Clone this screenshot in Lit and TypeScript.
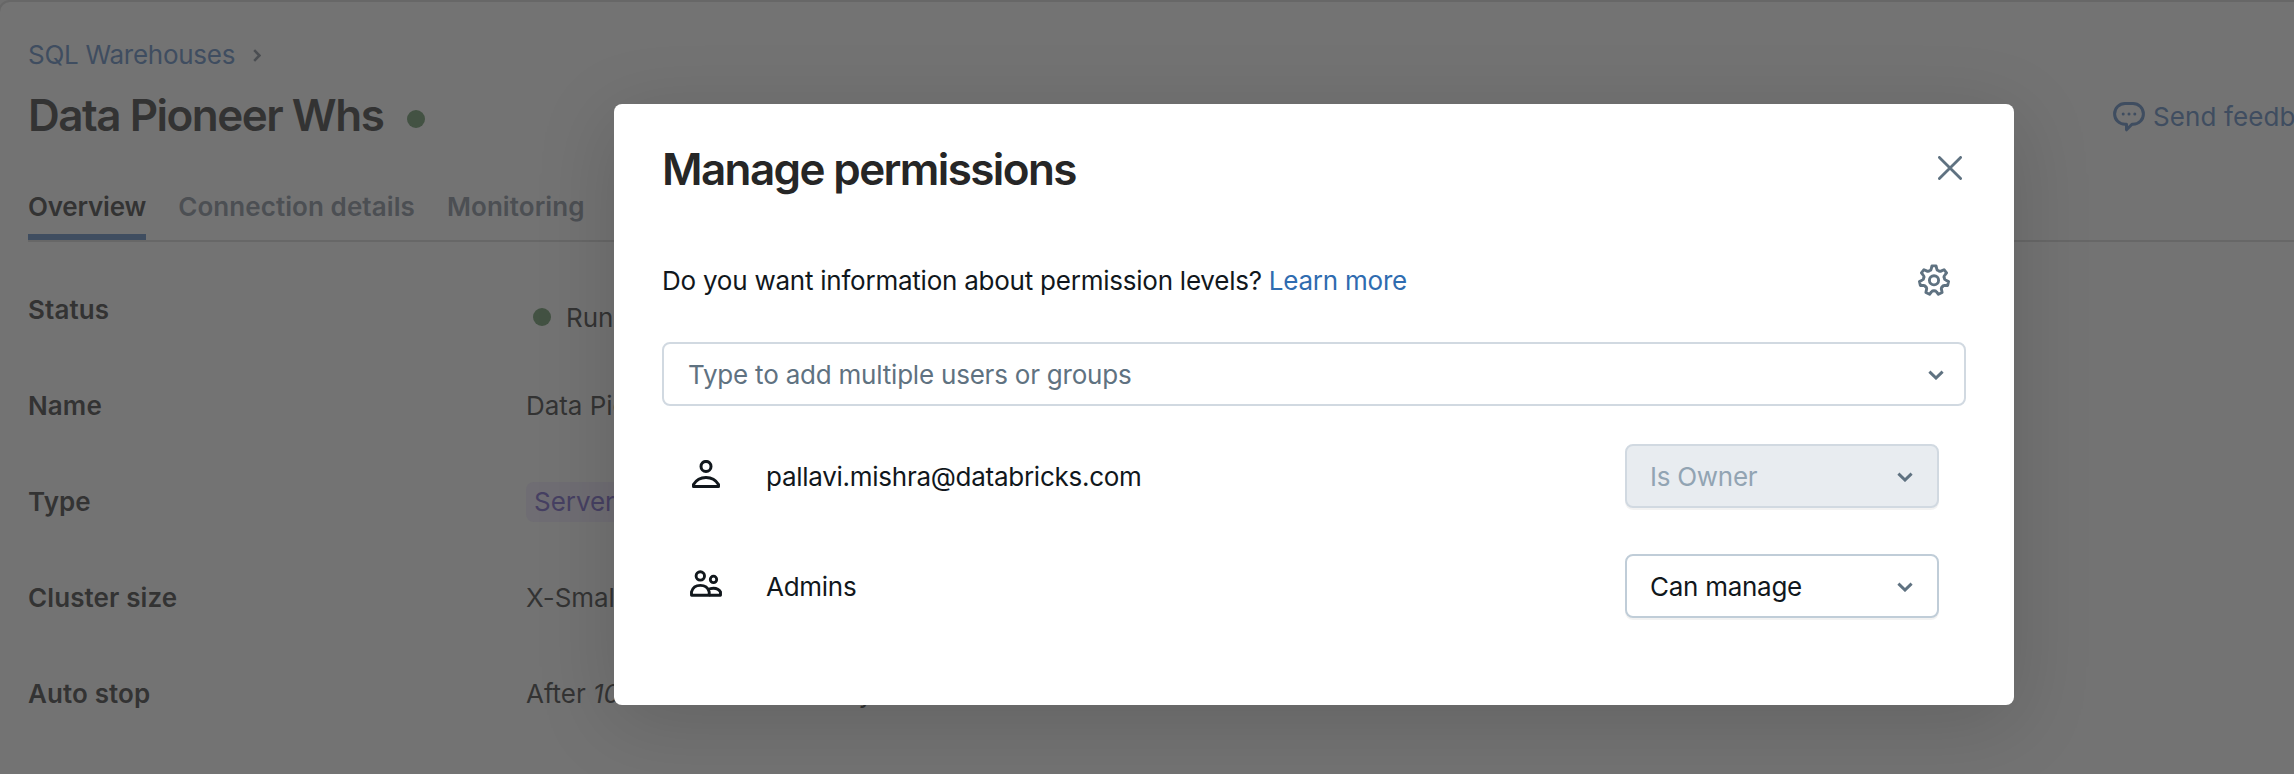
import { LitElement, html, svg, css } from "lit";
import { customElement, property } from "lit/decorators.js";

const gearPath = (() => {
  const pt = (r: number, deg: number) => {
    const a = ((deg - 90) * Math.PI) / 180;
    return `${(16 + r * Math.cos(a)).toFixed(2)} ${(16.3 + r * Math.sin(a)).toFixed(2)}`;
  };
  const step = 360 / 7;
  let d = "";
  for (let i = 0; i < 7; i++) {
    const c = i * step;
    d += `${i ? "L" : "M"}${pt(14.6, c - 8)} L${pt(14.6, c + 8)} L${pt(12, c + 13)} Q${pt(10, c + 18)} ${pt(10.7, c + step / 2)} Q${pt(10, c + step - 18)} ${pt(12, c + step - 13)} `;
  }
  return d + "Z";
})();

const icons: Record<string, { w: number; h: number; body: unknown }> = {
  gear: { w: 32, h: 32, body: svg`<path d=${gearPath} stroke-width="2.9"/><circle cx="16" cy="16.3" r="4.6" stroke-width="2.9"/>` },
  close: { w: 24, h: 24, body: svg`<path d="M1.4 1.4 22.6 22.6M22.6 1.4 1.4 22.6" stroke-width="2.8" stroke-linecap="round"/>` },
  down: { w: 16, h: 10, body: svg`<path d="M1.4 1.6 8 8 14.6 1.6" stroke-width="3" stroke-linejoin="miter"/>` },
  right: { w: 8, h: 13, body: svg`<path d="M1.2 1.2 6.4 6.5 1.2 11.8" stroke-width="2.5" stroke-linejoin="miter"/>` },
  user: { w: 28, h: 28, body: svg`<circle cx="14" cy="6.4" r="5" stroke-width="3"/><path d="M1.5 26.5v-1.9C4.2 20 9 17.5 14 17.5s9.800 2.500 12.500 7.100v1.900z" stroke-width="3"/>` },
  group: { w: 32, h: 27, body: svg`<circle cx="10.300" cy="5.900" r="4.200" stroke-width="2.900"/><circle cx="23.500" cy="9.400" r="3.200" stroke-width="2.800"/><path d="M1.500 25.200v-3.400c1.200-4 4.800-6.400 8.800-6.400s7.700 2.400 8.900 6.400v3.400z" stroke-width="2.900"/><path d="M18 19.600c1.700-1 3.600-1.400 5.500-1.400 3.300 0 5.600 1.200 7 3.800v3.200H19.200" stroke-width="2.900"/>` },
  chat: { w: 32, h: 30, body: svg`<path d="M12 1.500h8A10.300 10.300 0 0 1 20 22.300H19L13.500 27.800V22.300H12A10.300 10.300 0 0 1 12 1.500z" stroke-width="3"/><g fill="currentColor" stroke="none"><circle cx="10.200" cy="12" r="1.500"/><circle cx="16" cy="12" r="1.500"/><circle cx="21.800" cy="12" r="1.500"/></g>` },
};

@customElement("ui-icon")
class UiIcon extends LitElement {
  @property() name = "gear";
  static styles = css`
    :host { display: block; flex: none; }
    svg { display: block; fill: none; stroke: currentColor; stroke-linejoin: round; }
  `;
  render() {
    const i = icons[this.name];
    return html`<svg width=${i.w} height=${i.h} viewBox="0 0 ${i.w} ${i.h}">${i.body}</svg>`;
  }
}

@customElement("permission-select")
class PermissionSelect extends LitElement {
  @property() label = "";
  @property({ type: Boolean, reflect: true }) disabled = false;
  static styles = css`
    :host {
      display: flex; align-items: center; justify-content: space-between; box-sizing: border-box;
      width: 314px; height: 64px; padding: 0 24px 0 23px; border: 2px solid #c0cdd8; border-radius: 8px;
      background: #fff; color: #11171c; box-shadow: 0 2px 0 rgba(0, 0, 0, 0.05);
    }
    :host([disabled]) { background: #e8ecf0; border-color: #d1d9e1; color: #92a4b3; }
    span { padding-top: 2px; }
    ui-icon { color: #5f7281; margin-top: 1px; }
  `;
  render() {
    return html`<span>${this.label}</span><ui-icon name="down"></ui-icon>`;
  }
}

@customElement("app-root")
class AppRoot extends LitElement {
  static styles = css`
    :host {
      display: block; position: relative; width: 2294px; height: 774px; overflow: hidden;
      background: #6f6f6f; color: #333; font: 400 26px/40px Inter, "Liberation Sans", sans-serif; letter-spacing: -0.27px;
    }
    .page {
      box-sizing: border-box; height: 800px; width: 2500px; margin-left: -2px; padding: 33px 0 0 28px;
      border: 2px solid #676767; border-radius: 12px; background: #737373; white-space: nowrap;
    }
    .crumbs { display: flex; align-items: center; gap: 18px; color: #3f4d60; }
    .crumbs ui-icon { color: #4b4e52; }
    .heading { display: flex; align-items: center; height: 56px; margin-top: 12px; }
    .title { margin: 0; font-size: 44px; line-height: 56px; font-weight: 600; letter-spacing: -1.62px; }
    .page .title { letter-spacing: -1.5px; }
    .dot { flex: none; width: 18px; height: 18px; border-radius: 50%; background: #435243; }
    .heading .dot { margin: 8px 0 0 24px; }
    .feedback { display: flex; align-items: center; gap: 8px; width: 181px; margin: 4px 202px 0 auto; color: #3f4d60; letter-spacing: 0.1px; }
    .tabs { display: flex; gap: 32px; height: 53px; margin-top: 44px; border-bottom: 2px solid #676767; color: #4c4f53; font-weight: 600; letter-spacing: 0.08px; }
    .tab { box-sizing: border-box; height: 53px; }
    .tab.active { color: #333; border-bottom: 6px solid #3f4d60; letter-spacing: -0.2px; }
    .facts { margin: 20px 0 0; }
    .fact { display: grid; grid-template-columns: 498px 1fr; align-items: center; height: 96px; }
    .fact dt { font-weight: 600; letter-spacing: 0.1px; }
    .fact dd { margin: 0; letter-spacing: -0.05px; }
    .fact .running { display: flex; align-items: center; gap: 15px; padding: 16px 0 0 7px; }
    .fact .dot { margin-top: -2px; }
    .chip { display: inline-block; padding: 0 8px; border-radius: 8px; background: #6f6d73; color: #464062; }
    .mask { position: absolute; inset: 0; }
    .dialog {
      box-sizing: border-box; width: 1400px; height: 601px; margin: 104px 0 0 614px; padding: 37px 48px 0;
      border-radius: 8px; background: #fff; color: #11171c; box-shadow: 0 16px 80px rgba(0, 0, 0, 0.15);
    }
    .dialog-head { display: flex; align-items: center; justify-content: space-between; padding-right: 4px; color: #5f7281; }
    .dialog-head .title { color: #262626; }
    .close { margin-top: -2px; }
    .info { display: flex; align-items: center; justify-content: space-between; margin-top: 64px; padding-right: 16px; color: #5f7281; }
    .info ui-icon { margin-top: -2px; }
    .question { color: #11171c; letter-spacing: -0.235px; }
    .link { color: #2f6cb0; }
    .picker {
      box-sizing: border-box; display: flex; align-items: center; justify-content: space-between; height: 64px;
      margin-top: 41px; padding: 0 20px 0 24px; border: 2px solid #d1d9e1; border-radius: 8px; color: #5f7281; letter-spacing: -0.21px;
    }
    .picker span, .person span { padding-top: 2px; }
    .picker ui-icon { margin-top: 1px; }
    .people { display: flex; flex-direction: column; gap: 46px; margin: 38px 27px 0; }
    .person { display: grid; grid-template-columns: 34px 1fr auto; column-gap: 43px; align-items: center; }
    .person ui-icon { justify-self: center; margin-top: -4px; }
    .person ui-icon[name="group"] { margin-top: -6px; }
  `;
  render() {
    return html`
      <main class="page">
        <nav class="crumbs"><span>SQL Warehouses</span><ui-icon name="right"></ui-icon></nav>
        <header class="heading">
          <h1 class="title">Data Pioneer Whs</h1><span class="dot"></span>
          <a class="feedback"><ui-icon name="chat"></ui-icon><span>Send feedback</span></a>
        </header>
        <nav class="tabs">
          <span class="tab active">Overview</span><span class="tab">Connection details</span><span class="tab">Monitoring</span>
        </nav>
        <dl class="facts">
          <div class="fact"><dt>Status</dt><dd class="running"><span class="dot"></span><span>Running</span></dd></div>
          <div class="fact"><dt>Name</dt><dd>Data Pioneer Whs</dd></div>
          <div class="fact"><dt>Type</dt><dd><span class="chip">Serverless</span></dd></div>
          <div class="fact"><dt>Cluster size</dt><dd>X-Small</dd></div>
          <div class="fact"><dt>Auto stop</dt><dd>After <i>10 minutes</i> of inactivity</dd></div>
        </dl>
      </main>
      <div class="mask">
        <section class="dialog">
          <div class="dialog-head"><h2 class="title">Manage permissions</h2><ui-icon class="close" name="close"></ui-icon></div>
          <div class="info">
            <span class="question">Do you want information about permission levels? <a class="link">Learn more</a></span>
            <ui-icon name="gear"></ui-icon>
          </div>
          <div class="picker"><span>Type to add multiple users or groups</span><ui-icon name="down"></ui-icon></div>
          <div class="people">
            <div class="person"><ui-icon name="user"></ui-icon><span>pallavi.mishra@databricks.com</span><permission-select label="Is Owner" disabled></permission-select></div>
            <div class="person"><ui-icon name="group"></ui-icon><span>Admins</span><permission-select label="Can manage"></permission-select></div>
          </div>
        </section>
      </div>
    `;
  }
}
